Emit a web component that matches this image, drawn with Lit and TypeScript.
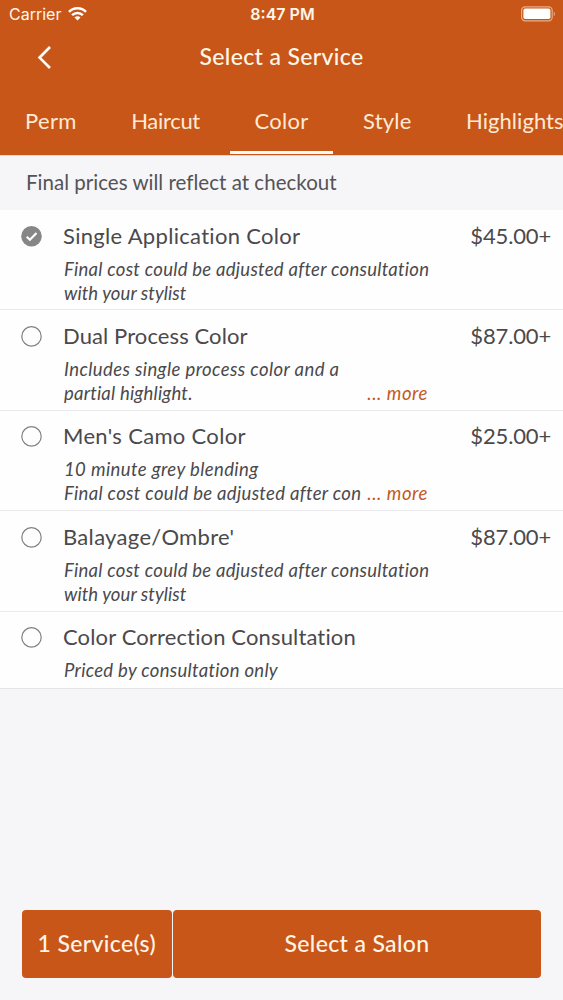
import { LitElement, html, css, nothing } from "lit";
import { customElement, property, state } from "lit/decorators.js";
import { classMap } from "lit/directives/class-map.js";
import { styleMap } from "lit/directives/style-map.js";

/** A run of text with its own tracking, in pixels. */
interface Run {
  text: string;
  track: number;
}

interface Service {
  name: Run;
  price?: string;
  lines: Run[];
  more?: boolean;
}

const TABS: Run[] = [
  { text: "Perm", track: 0.3 },
  { text: "Haircut", track: -0.3 },
  { text: "Color", track: 0.3 },
  { text: "Style", track: 0.2 },
  { text: "Highlights", track: 0.05 },
];

const SERVICES: Service[] = [
  {
    name: { text: "Single Application Color", track: 0.31 },
    price: "$45.00+",
    lines: [
      { text: "Final cost could be adjusted after consultation", track: 0.27 },
      { text: "with your stylist", track: 0.06 },
    ],
  },
  {
    name: { text: "Dual Process Color", track: 0.1 },
    price: "$87.00+",
    lines: [
      { text: "Includes single process color and a", track: 0.4 },
      { text: "partial highlight.", track: 0.2 },
    ],
    more: true,
  },
  {
    name: { text: "Men's Camo Color", track: 0.32 },
    price: "$25.00+",
    lines: [
      { text: "10 minute grey blending", track: 0.39 },
      { text: "Final cost could be adjusted after con", track: 0.32 },
    ],
    more: true,
  },
  {
    name: { text: "Balayage/Ombre'", track: 0.32 },
    price: "$87.00+",
    lines: [
      { text: "Final cost could be adjusted after consultation", track: 0.27 },
      { text: "with your stylist", track: 0.06 },
    ],
  },
  {
    name: { text: "Color Correction Consultation", track: 0.14 },
    lines: [{ text: "Priced by consultation only", track: 0.29 }],
  },
];

const run = (r: Run, cls = "") =>
  html`<span class=${cls} style=${styleMap({ letterSpacing: `${r.track}px` })}>${r.text}</span>`;

@customElement("service-row")
export class ServiceRow extends LitElement {
  @property({ attribute: false }) service!: Service;
  @property({ type: Boolean }) selected = false;

  static styles = css`
    :host {
      display: flex;
      box-sizing: border-box;
      min-height: 100.4px;
      padding: 10.6px 12px 0 21px;
      background: #fefefe;
      border-bottom: 1px solid #ebebed;
    }
    :host(:last-of-type) {
      min-height: 0;
      height: 77.4px;
      border-bottom-color: #e4e4e7;
    }
    svg {
      flex: none;
      width: 21px;
      height: 21px;
      margin: 5px 21px 0 0;
    }
    .body {
      width: 365px;
      display: flex;
      flex-direction: column;
      gap: 6px;
    }
    .name,
    .price {
      font-size: 22px;
      line-height: 30px;
    }
    .price {
      margin-left: auto;
      letter-spacing: -0.15px;
    }
    .desc {
      padding-left: 1px;
      font-size: 18.5px;
      line-height: 24px;
      font-style: italic;
    }
    .line {
      display: flex;
      justify-content: space-between;
    }
    .more {
      color: #c4591f;
      letter-spacing: 0.55px;
    }
  `;

  render() {
    const { name, price, lines, more } = this.service;
    return html`
      ${this.selected
        ? html`<svg viewBox="0 0 21 21" fill="none">
            <circle cx="10.5" cy="10.3" r="10.3" fill="#868686" />
            <path d="M5.7 10.8 8.9 13.8 15.5 7.1" stroke="#fff" stroke-width="2.1" />
          </svg>`
        : html`<svg viewBox="0 0 21 21" fill="none">
            <circle cx="10.5" cy="10.4" r="9.7" stroke="#808083" stroke-width="1.2" />
          </svg>`}
      <div class="body">
        ${run(name, "name")}
        <div class="desc">
          ${lines.map(
            (line, i) => html`<div class="line">
              ${run(line)}
              ${more && i === lines.length - 1 ? html`<span class="more">... more</span>` : nothing}
            </div>`
          )}
        </div>
      </div>
      ${price ? html`<span class="price">${price}</span>` : nothing}
    `;
  }
}

@customElement("app-root")
export class AppRoot extends LitElement {
  @state() private activeTab = 2;
  @state() private chosen = 0;

  static styles = css`
    :host {
      display: flex;
      flex-direction: column;
      box-sizing: border-box;
      height: 1000px;
      overflow: hidden;
      background: #f6f6f8;
      color: #4a494c;
      font-family: Lato, "Open Sans", sans-serif;
      white-space: nowrap;
    }
    header {
      display: flex;
      flex-direction: column;
      flex: none;
      height: 155px;
      background: #c85618;
      color: #fff6ea;
    }
    .status {
      display: grid;
      grid-template-columns: 1fr auto 1fr;
      align-items: center;
      height: 28px;
      padding: 0 7px 0 9px;
      font: 400 16px Inter, sans-serif;
    }
    .carrier {
      display: flex;
      align-items: center;
      gap: 7px;
    }
    .wifi {
      width: 19px;
      height: 14px;
    }
    .clock {
      font-weight: 600;
    }
    .battery {
      width: 36px;
      height: 16px;
      justify-self: end;
    }
    .nav {
      display: grid;
      grid-template-columns: 1fr auto 1fr;
      align-items: center;
      height: 56px;
      padding: 0 37px;
      font-size: 23px;
      font-weight: 500;
      letter-spacing: 0.35px;
    }
    .back {
      width: 14px;
      height: 24px;
      padding-top: 2px;
    }
    .tabs {
      display: flex;
      flex: 1;
      gap: 5.5px;
      padding-left: 0.6px;
      font-size: 22px;
    }
    .tab {
      flex: none;
      box-sizing: border-box;
      height: 70px;
      padding: 22px 24.5px 0;
      line-height: 29px;
      border-bottom: 3px solid transparent;
      color: #ffead6;
    }
    .tab:last-child {
      padding-right: 0;
    }
    .tab.on {
      border-bottom-color: #fffaf4;
    }
    .notice {
      flex: none;
      box-sizing: border-box;
      height: 55px;
      padding-left: 26px;
      line-height: 53px;
      font-size: 20.5px;
      letter-spacing: 0.02px;
      color: #545356;
      border-top: 1px solid #fbd3ae;
    }
    .actions {
      display: grid;
      grid-template-columns: 149.5px 1fr;
      gap: 1.5px;
      height: 68px;
      margin: auto 22px 22px;
    }
    .btn {
      border-radius: 4px;
      background: #c85618;
      color: #fff4e6;
      font-size: 23px;
      font-weight: 500;
      line-height: 67px;
      letter-spacing: 0.35px;
      text-align: center;
    }
  `;

  render() {
    return html`
      <header>
        <div class="status">
          <div class="carrier">
            <span>Carrier</span>
            <svg class="wifi" viewBox="0 0 19 14" fill="none" stroke="#fff" stroke-width="2.5">
              <path d="M1 4.9a12 12 0 0 1 17 0" />
              <path d="M4.1 8.2a7.6 7.6 0 0 1 10.8 0" />
              <path d="M9.5 13.6 6.5 10.5a4.2 4.2 0 0 1 6 0z" fill="#fff" stroke="none" />
            </svg>
          </div>
          <span class="clock">8:47 PM</span>
          <svg class="battery" viewBox="0 0 36 16" fill="none">
            <rect x="1.6" y="0.8" width="30.6" height="14" rx="3.6" stroke="#e9ac88" stroke-width="1.2" />
            <rect x="3.4" y="2.6" width="27" height="10.4" rx="1.8" fill="#fff" />
            <path d="M33.8 5.4v4.8c1.6-.8 1.6-4 0-4.8z" fill="#e9ac88" />
          </svg>
        </div>
        <div class="nav">
          <svg class="back" viewBox="0 0 14 24" fill="none" stroke="#fff" stroke-width="2.7">
            <path d="M13 2 2.6 12.6 13 23" />
          </svg>
          <span>Select a Service</span>
        </div>
        <div class="tabs">
          ${TABS.map(
            (tab, i) => html`<div
              class=${classMap({ tab: true, on: i === this.activeTab })}
              @click=${() => (this.activeTab = i)}
            >${run(tab)}</div>`
          )}
        </div>
      </header>
      <div class="notice">Final prices will reflect at checkout</div>
      ${SERVICES.map(
        (service, i) => html`<service-row
          .service=${service}
          ?selected=${i === this.chosen}
          @click=${() => (this.chosen = i)}
        ></service-row>`
      )}
      <div class="actions">
        <div class="btn">1 Service(s)</div>
        <div class="btn">Select a Salon</div>
      </div>
    `;
  }
}
